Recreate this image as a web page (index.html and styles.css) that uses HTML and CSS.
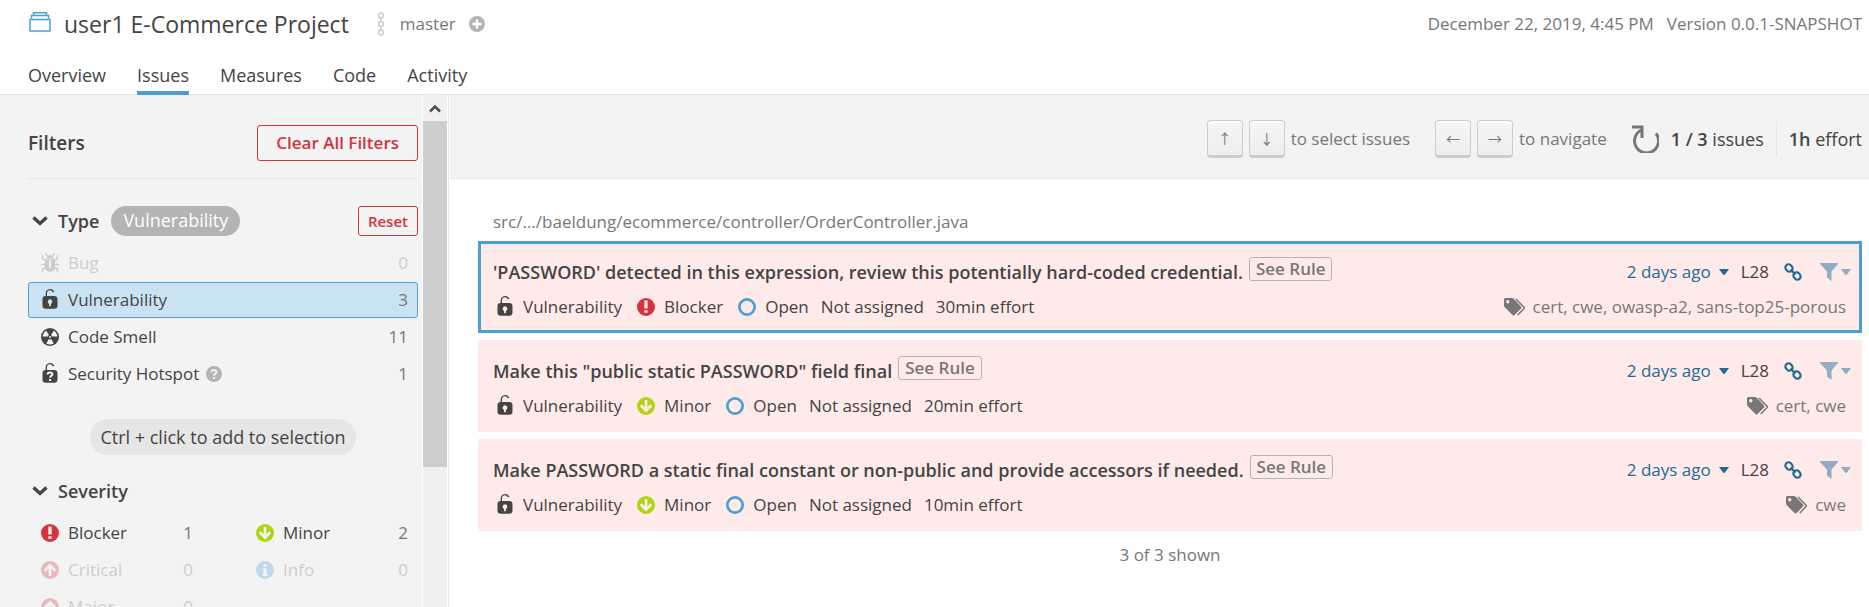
FILE: index.html
```html
<!DOCTYPE html>
<html lang="en">
<head>
<meta charset="utf-8">
<title>user1 E-Commerce Project - Issues</title>
<link rel="stylesheet" href="styles.css">
</head>
<body>
<svg class="sprite" aria-hidden="true">
  <symbol id="lock" viewBox="0 0 16 16"><path fill="currentColor" d="M10.8 5.400H6V3.900a2.200 2.200 0 0 1 2-2.400 2.100 2.100 0 0 1 1.800 1.100.48.48 0 0 0 .7.2.48.48 0 0 0 .2-.7A3 3 0 0 0 8 .7a3.200 3.200 0 0 0-2.900 3.200v1.500A2.100 2.100 0 0 0 3 7.500v4.200a2.200 2.200 0 0 0 2.200 2.200h5.600a2.200 2.200 0 0 0 2.200-2.200V7.600a2.200 2.200 0 0 0-2.200-2.200zM8.600 10.700v1.400H7.400v-1.400A1.700 1.700 0 0 1 8 7.500a1.700 1.700 0 0 1 .6 3.200z"/></symbol>
  <symbol id="hotspot" viewBox="0 0 16 16"><path fill="currentColor" d="M10.8 5.400H6V3.900a2.200 2.200 0 0 1 2-2.400 2.100 2.100 0 0 1 1.800 1.100.48.48 0 0 0 .7.2.48.48 0 0 0 .2-.7A3 3 0 0 0 8 .7a3.200 3.200 0 0 0-2.900 3.200v1.500A2.100 2.100 0 0 0 3 7.500v4.200a2.200 2.200 0 0 0 2.200 2.200h5.600a2.200 2.200 0 0 0 2.200-2.200V7.600a2.200 2.200 0 0 0-2.200-2.200z"/><path class="cut-line" d="M6.400 8.300Q6.500 7 8 7t1.600 1.200c0 1-1.500 1-1.500 2.300M8.100 11.400v1.200"/></symbol>
  <symbol id="bug" viewBox="0 0 16 16"><path fill="currentColor" d="M5.600 5c0-3 4.800-3 4.800 0zM4.700 5.500h6.600v5.300c0 4-6.600 4-6.600 0z"/><path fill="none" stroke="currentColor" stroke-width="1" d="M6.300 3.300 5 1.400M9.700 3.300 11 1.400M5 6.300 3.200 5.500 3 2.800M11 6.300l1.800-.8.2-2.700M5 9H2M11 9h3M5 11l-1.800.8-.2 2.500M11 11l1.800.8.2 2.500"/><path class="cut-line" d="M8 6.300v5"/></symbol>
  <symbol id="smell" viewBox="0 0 16 16"><circle cx="8" cy="8" r="6" fill="currentColor"/><path class="cut" d="M6.600 7.600H3.100A5 5 0 0 1 5.500 3.800L7.300 6.700A1.600 1.600 0 0 0 6.600 7.600zM9.400 7.600h3.500A5 5 0 0 0 10.500 3.800L8.700 6.700A1.600 1.600 0 0 1 9.400 7.600zM7.200 9.400 5.500 12.300a5 5 0 0 0 5 0L8.800 9.400A1.600 1.600 0 0 1 7.200 9.400z"/><circle class="cut" cx="8" cy="8" r=".7"/></symbol>
  <symbol id="blocker" viewBox="0 0 16 16"><circle cx="8" cy="8" r="6" fill="#d4333f"/><path class="cut" d="M6.900 3.700h2.200V9H6.900zM6.900 10.200h2.200v1.700H6.900z"/></symbol>
  <symbol id="critical" viewBox="0 0 16 16"><circle cx="8" cy="8" r="6" fill="#d4333f"/><path class="cut-arrow" d="M8 12V5M4.500 8.500 8 4.900l3.500 3.600"/></symbol>
  <symbol id="minor" viewBox="0 0 16 16"><circle cx="8" cy="8" r="6" fill="#b0d513"/><path class="cut-arrow" d="M8 4v7M4.500 7.500 8 11.100l3.500-3.600"/></symbol>
  <symbol id="info" viewBox="0 0 16 16"><circle cx="8" cy="8" r="6" fill="#4b9fd5"/><path class="cut" d="M7 4h2v1.700H7zM6.500 6.800H9v3.900h.8V12H6.400v-1.300H7V8h-.5z"/></symbol>
  <symbol id="open" viewBox="0 0 16 16"><circle cx="8" cy="8" r="5.100" fill="none" stroke="#4b9fd5" stroke-width="1.800"/></symbol>
  <symbol id="chevron" viewBox="0 0 16 16"><path fill="none" stroke="currentColor" stroke-width="3.400" d="M1.500 4.500 8 10.500l6.500-6"/></symbol>
  <symbol id="caret" viewBox="0 0 10 6"><path fill="currentColor" d="M0 0h10L6 5.500Q5 6.300 4 5.500z"/></symbol>
  <symbol id="link" viewBox="0 0 18 18"><g fill="none" stroke="currentColor" stroke-width="2.200"><rect x="1.200" y="1.800" width="7.600" height="6.400" rx="3.200" transform="rotate(45 5 5)"/><rect x="9.200" y="9.800" width="7.600" height="6.400" rx="3.200" transform="rotate(45 13 13)"/><path d="m6.500 6.500 5 5"/></g></symbol>
  <symbol id="funnel" viewBox="0 0 18 18"><path fill="currentColor" d="M0 0h18v1L11.500 8.500V18L7 14.500v-6L0 1z"/></symbol>
  <symbol id="tags" viewBox="0 0 21 18"><path fill="currentColor" fill-rule="evenodd" d="M0 1.500Q0 0 1.500 0H8q1 0 2 1l7 7.500q1 1 0 2L10.500 17q-1 1-2 0L1 9.500Q0 8.500 0 7.500zM3.700 2a1.700 1.700 0 1 0 .1 0z"/><path fill="none" stroke="currentColor" stroke-width="1.500" d="M12 1 20 9.200q.6.700 0 1.400L13.800 17"/></symbol>
</svg>

<header class="page-head">
  <div class="head-row">
    <svg class="project-icon" viewBox="0 0 22 20" aria-hidden="true"><path fill="none" stroke="#4b9fd5" stroke-width="1.500" d="M1 7.500h20V19H1zM2.500 6.500v-3h17v3M4.500 3V.8h13V3"/></svg>
    <h1 class="title">user1 E-Commerce Project</h1>
    <svg class="branch-icon" viewBox="0 0 8 24" aria-hidden="true"><g fill="none" stroke="#cdcdcd" stroke-width="1.600"><circle cx="4" cy="3.500" r="2.500"/><circle cx="4" cy="12" r="2.500"/><circle cx="4" cy="20.500" r="2.500"/><path d="M4 6v3.500M4 14.500V18"/></g></svg>
    <span class="branch">master</span>
    <button class="plain plus" aria-label="Add branch"><svg viewBox="0 0 16 16"><circle cx="8" cy="8" r="8" fill="#b4b4b4"/><path stroke="#fff" stroke-width="2.500" d="M8 3.500v9M3.500 8h9"/></svg></button>
    <div class="meta-right"><span>December 22, 2019, 4:45 PM</span><span>Version 0.0.1-SNAPSHOT</span></div>
  </div>
  <nav class="tabs">
    <a href="#overview">Overview</a>
    <a href="#issues" class="active">Issues</a>
    <a href="#measures">Measures</a>
    <a href="#code">Code</a>
    <a href="#activity">Activity</a>
  </nav>
</header>

<div class="layout">
  <aside class="side">
    <div class="filters">
      <div class="filters-head"><h2>Filters</h2><button class="danger">Clear All Filters</button></div>
      <section class="facet">
        <div class="facet-head"><button class="plain facet-name"><svg class="chev"><use href="#chevron"/></svg>Type</button><span class="badge">Vulnerability</span><button class="danger small">Reset</button></div>
        <div class="facet-list">
          <button class="item off"><svg class="ico"><use href="#bug"/></svg><span>Bug</span><b>0</b></button>
          <button class="item selected"><svg class="ico"><use href="#lock"/></svg><span>Vulnerability</span><b>3</b></button>
          <button class="item"><svg class="ico"><use href="#smell"/></svg><span>Code Smell</span><b>11</b></button>
          <button class="item"><svg class="ico"><use href="#hotspot"/></svg><span>Security Hotspot</span><svg class="help" viewBox="0 0 16 16"><circle cx="8" cy="8" r="8" fill="#b4b4b4"/><path class="cut-line wide" d="M5.600 6.300C5.600 3.200 10.400 3.200 10.400 6c0 1.800-2.400 1.700-2.400 3.700M8 11v2"/></svg><b>1</b></button>
        </div>
        <p class="hint">Ctrl + click to add to selection</p>
      </section>
      <section class="facet">
        <div class="facet-head"><button class="plain facet-name"><svg class="chev"><use href="#chevron"/></svg>Severity</button></div>
        <div class="facet-list two">
          <button class="item"><svg class="ico"><use href="#blocker"/></svg><span>Blocker</span><b>1</b></button>
          <button class="item"><svg class="ico"><use href="#minor"/></svg><span>Minor</span><b>2</b></button>
          <button class="item off"><svg class="ico"><use href="#critical"/></svg><span>Critical</span><b>0</b></button>
          <button class="item off"><svg class="ico"><use href="#info"/></svg><span>Info</span><b>0</b></button>
          <button class="item off"><svg class="ico"><use href="#critical"/></svg><span>Major</span><b>0</b></button>
        </div>
      </section>
    </div>
    <div class="scroll"><button class="plain up" aria-label="Scroll up"><svg viewBox="0 0 12 9"><path fill="none" stroke="#505050" stroke-width="2.500" d="M1 7.500 6 2.500l5 5"/></svg></button><div class="thumb"></div></div>
  </aside>

  <main class="main">
    <div class="toolbar">
      <div class="keys"><kbd>↑</kbd><kbd>↓</kbd><span>to select issues</span></div>
      <div class="keys"><kbd>←</kbd><kbd>→</kbd><span>to navigate</span></div>
      <div class="totals">
        <button class="plain reload" aria-label="Reload"><svg viewBox="0 0 27 28"><path fill="none" stroke="#777" stroke-width="3" d="M24 8.500A12 12 0 1 1 9.500 5M0 2h10v11"/></svg></button>
        <span class="count"><strong>1 / 3</strong> issues</span>
        <span class="effort"><strong>1h</strong> effort</span>
      </div>
    </div>
    <div class="list">
      <p class="path">src/.../baeldung/ecommerce/controller/OrderController.java</p>

      <article class="issue current">
        <div class="line"><h3>'PASSWORD' detected in this expression, review this potentially hard-coded credential.</h3><button class="rule">See Rule</button>
          <div class="actions"><button class="plain ago">2 days ago<svg class="caret"><use href="#caret"/></svg></button><span>L28</span><a href="#issue-1" aria-label="Permalink"><svg class="link"><use href="#link"/></svg></a><button class="plain funnel" aria-label="Filter similar issues"><svg class="fun"><use href="#funnel"/></svg><svg class="caret"><use href="#caret"/></svg></button></div></div>
        <div class="line sub"><span class="kind"><svg class="ico"><use href="#lock"/></svg>Vulnerability</span><span class="kind"><svg class="ico"><use href="#blocker"/></svg>Blocker</span><span class="kind"><svg class="ico"><use href="#open"/></svg>Open</span><span>Not assigned</span><span>30min effort</span>
          <button class="plain tags"><svg><use href="#tags"/></svg>cert, cwe, owasp-a2, sans-top25-porous</button></div>
      </article>

      <article class="issue">
        <div class="line"><h3>Make this "public static PASSWORD" field final</h3><button class="rule">See Rule</button>
          <div class="actions"><button class="plain ago">2 days ago<svg class="caret"><use href="#caret"/></svg></button><span>L28</span><a href="#issue-2" aria-label="Permalink"><svg class="link"><use href="#link"/></svg></a><button class="plain funnel" aria-label="Filter similar issues"><svg class="fun"><use href="#funnel"/></svg><svg class="caret"><use href="#caret"/></svg></button></div></div>
        <div class="line sub"><span class="kind"><svg class="ico"><use href="#lock"/></svg>Vulnerability</span><span class="kind"><svg class="ico"><use href="#minor"/></svg>Minor</span><span class="kind"><svg class="ico"><use href="#open"/></svg>Open</span><span>Not assigned</span><span>20min effort</span>
          <button class="plain tags"><svg><use href="#tags"/></svg>cert, cwe</button></div>
      </article>

      <article class="issue">
        <div class="line"><h3>Make PASSWORD a static final constant or non-public and provide accessors if needed.</h3><button class="rule">See Rule</button>
          <div class="actions"><button class="plain ago">2 days ago<svg class="caret"><use href="#caret"/></svg></button><span>L28</span><a href="#issue-3" aria-label="Permalink"><svg class="link"><use href="#link"/></svg></a><button class="plain funnel" aria-label="Filter similar issues"><svg class="fun"><use href="#funnel"/></svg><svg class="caret"><use href="#caret"/></svg></button></div></div>
        <div class="line sub"><span class="kind"><svg class="ico"><use href="#lock"/></svg>Vulnerability</span><span class="kind"><svg class="ico"><use href="#minor"/></svg>Minor</span><span class="kind"><svg class="ico"><use href="#open"/></svg>Open</span><span>Not assigned</span><span>10min effort</span>
          <button class="plain tags"><svg><use href="#tags"/></svg>cwe</button></div>
      </article>

      <p class="shown">3 of 3 shown</p>
    </div>
  </main>
</div>
</body>
</html>
```
FILE: styles.css
```css
* { box-sizing: border-box; }
body {
  margin: 0;
  height: 100vh;
  display: flex;
  flex-direction: column;
  overflow: hidden;
  background: #fff;
  color: #444;
  font: 17px/24px "Open Sans", "Noto Sans", sans-serif;
}
h1, h2, h3, p { margin: 0; }
svg { display: block; flex: none; }
button { font: inherit; color: inherit; cursor: pointer; }
a { color: inherit; text-decoration: none; }
.sprite { display: none; }
.plain { border: 0; padding: 0; background: none; display: flex; align-items: center; }
.ico { width: 24px; height: 24px; }
.cut { fill: var(--bg, #f3f3f3); }
.cut-line { fill: none; stroke: var(--bg, #f3f3f3); stroke-width: 1.300; }
.cut-line.wide { stroke-width: 2; }
.cut-arrow { fill: none; stroke: var(--bg, #f3f3f3); stroke-width: 1.800; }

.page-head { flex: none; border-bottom: 1px solid #e6e6e6; }
.head-row { display: flex; align-items: center; height: 48px; padding: 0 7px 0 29px; }
.project-icon { width: 22px; height: 20px; margin-top: -4px; }
.title { margin-left: 13px; font-size: 23px; line-height: 32px; font-weight: 400; }
.branch-icon { width: 8px; height: 24px; margin: 0 15px 0 28px; }
.branch { color: #777; }
.plus { margin-left: 13px; }
.plus svg { width: 16px; height: 16px; }
.meta-right { margin-left: auto; display: flex; gap: 13px; color: #777; }
.tabs { display: flex; gap: 31px; height: 46px; padding: 0 28px; font-size: 18px; }
.tabs a { padding-top: 15px; margin-bottom: -1px; border-bottom: 4px solid transparent; }
.tabs .active { border-color: #4b9fd5; }

.layout { flex: 1; min-height: 0; display: grid; grid-template-columns: 449px 1fr; }
.side { display: flex; min-height: 0; background: #f3f3f3; border-right: 1px solid #e6e6e6; }
.filters { flex: 1; min-width: 0; padding: 30px 4px 0 28px; overflow: hidden; }
.scroll { flex: none; width: 26px; background: #f0f0f0; border-left: 1px solid #fff; border-right: 1px solid #fff; }
.up { width: 100%; height: 26px; justify-content: center; }
.up svg { width: 12px; height: 9px; }
.thumb { height: 346px; background: #cdcdcd; }
.filters-head { display: flex; align-items: center; justify-content: space-between; padding-bottom: 17px; border-bottom: 1px solid #e6e6e6; }
h2 { font-size: 19px; font-weight: 600; line-height: 24px; }
.danger { height: 36px; padding: 0 18px; border: 1px solid #d4333f; border-radius: 3px; background: none; color: #d4333f; font-weight: 600; line-height: 24px; }
.danger.small { height: 30px; padding: 0 9px; margin-left: auto; font-size: 15px; }
.facet-head { display: flex; align-items: center; height: 30px; margin-top: 27px; font-size: 18px; }
.facet-name { font-weight: 600; }
.chev { width: 16px; height: 16px; margin: 0 10px 0 4px; }
.badge { height: 30px; margin-left: 12px; padding: 0 12px; border-radius: 15px; background: #b4b4b4; color: #fff; line-height: 29px; }
.facet-list { display: grid; row-gap: 1px; margin-top: 9px; }
.facet-list.two { grid-template-columns: 1fr 1fr; column-gap: 40px; }
.item { display: flex; align-items: center; height: 36px; padding: 0 9px; border: 1px solid transparent; border-radius: 3px; background: none; text-align: left; }
.item span { margin-left: 6px; }
.item b { margin-left: auto; font-weight: 400; color: #777; }
.item.selected { background: #cae3f2; border-color: #4b9fd5; --bg: #cae3f2; }
.item.off, .item.off b { color: #cdcdcd; }
.two .off .ico { opacity: .3; }
.help { width: 16px; height: 16px; margin-left: 7px; }
.hint { width: fit-content; margin: 27px auto 0; padding: 6px 10px; border-radius: 18px; background: #e6e6e6; font-size: 18px; }
.facet + .facet .facet-head { margin-top: 21px; }

.main { min-width: 0; }
.toolbar { display: flex; align-items: center; justify-content: flex-end; gap: 25px; height: 84px; margin-left: 1px; padding: 4px 7px 0 0; background: #f3f3f3; border-bottom: 1px solid #e6e6e6; }
.keys { display: flex; align-items: center; gap: 6px; color: #777; }
kbd { width: 36px; height: 38px; border: 1px solid #cdcdcd; border-bottom-width: 3px; border-radius: 4px; background: linear-gradient(#f5f5f5, #eee); box-shadow: inset 0 2px #fff; font: 14px/34px "Noto Sans CJK SC", "DejaVu Sans", sans-serif; text-align: center; }
.totals { display: flex; align-items: center; font-size: 18px; }
.reload svg { width: 27px; height: 28px; }
.count { margin-left: 12px; padding-right: 12px; border-right: 1px solid #e6e6e6; line-height: 36px; }
.effort { margin-left: 12px; }
strong { font-weight: 600; }

.list { padding: 31px 7px 0 29px; }
.path { padding-left: 15px; margin-bottom: 7px; color: #777; }
.issue { margin-bottom: 7px; padding: 11px 8px 6px 12px; border: 3px solid #ffeaea; background: #ffeaea; --bg: #ffeaea; }
.issue.current { border-color: #4b9fd5; }
.line { display: flex; align-items: center; height: 34px; }
.line.sub { height: 35px; }
h3 { font-size: 18px; font-weight: 600; }
.rule { height: 24px; margin: 0 0 6px 6px; padding: 0 6px; border: 1px solid #b4b4b4; border-radius: 3px; background: none; color: #777; font-weight: 600; line-height: 20px; }
.actions { display: flex; align-items: center; margin-left: auto; gap: 12px; }
.ago, .actions a { color: #236a97; }
.caret { width: 10px; height: 6px; margin-left: 8px; }
.link { width: 18px; height: 18px; margin: 0 6px 0 3px; }
.funnel { color: #91acc4; }
.fun { width: 18px; height: 18px; }
.funnel .caret { margin-left: 3px; }
.sub { gap: 12px; }
.kind { display: flex; align-items: center; gap: 6px; }
.tags { margin-left: auto; margin-right: 5px; gap: 8px; color: #777; }
.tags svg { width: 21px; height: 18px; }
.shown { margin-top: 12px; text-align: center; color: #777; }
```
